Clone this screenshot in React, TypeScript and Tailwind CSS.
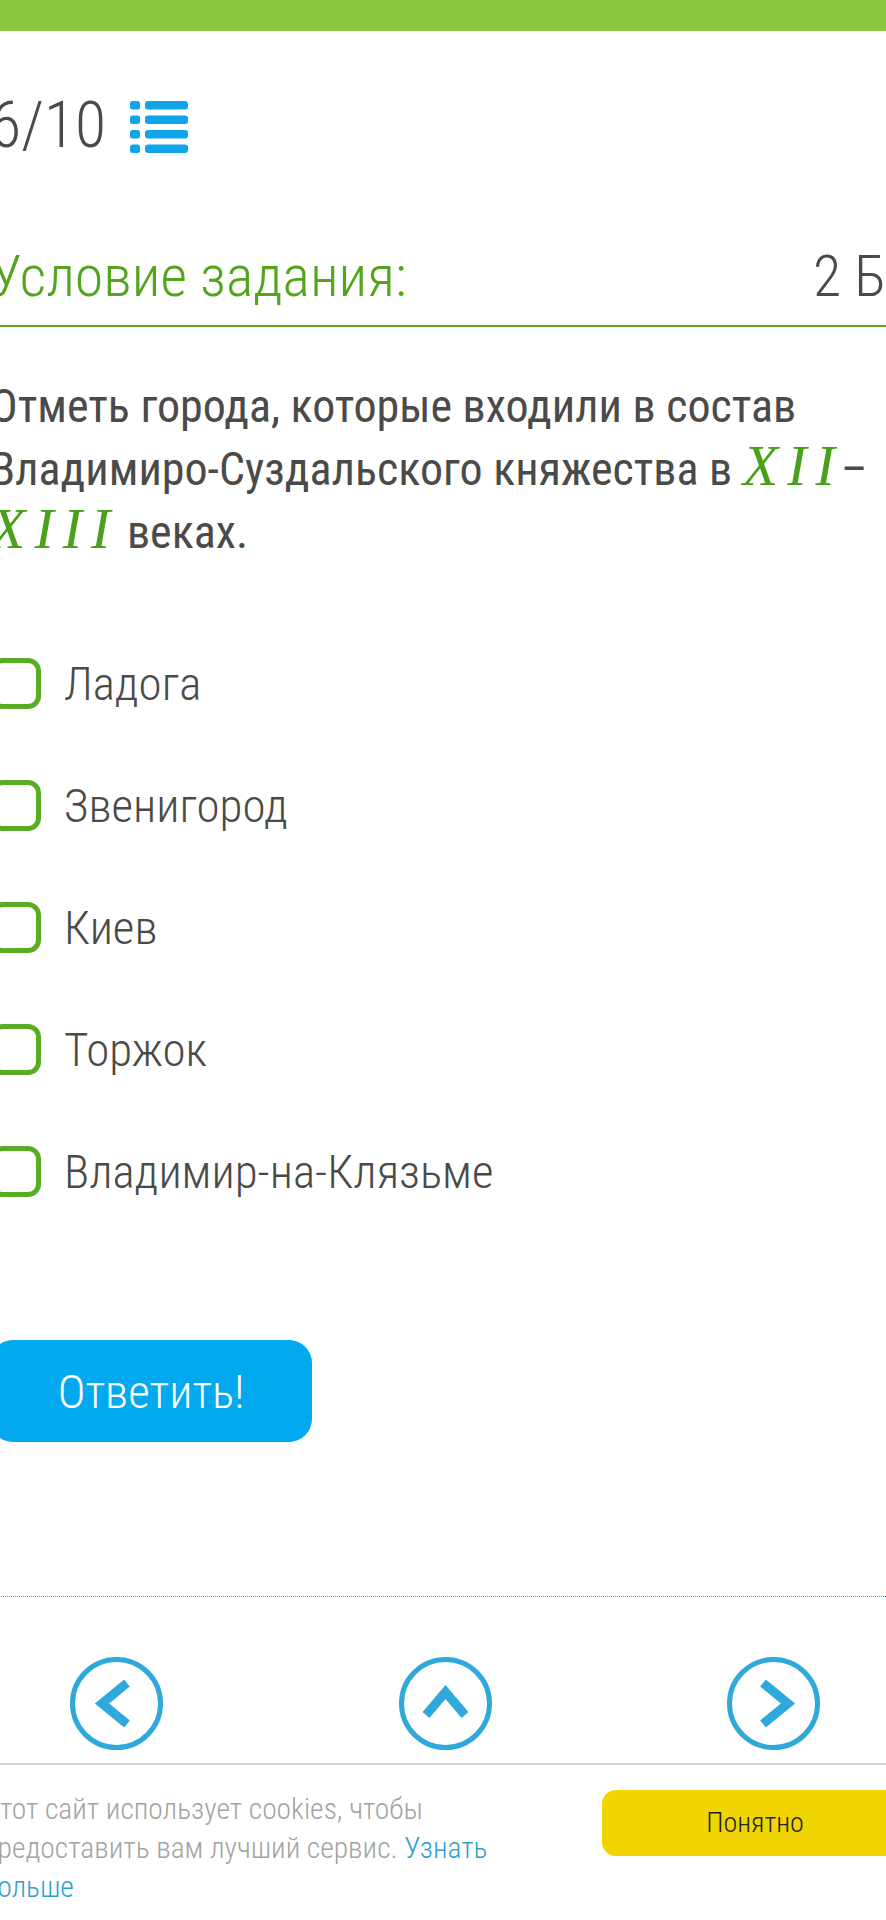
import { useState } from 'react'

const OPTIONS = ['Ладога', 'Звенигород', 'Киев', 'Торжок', 'Владимир-на-Клязьме']

function ListIcon() {
  return (
    <svg width="59" height="54" viewBox="0 0 59 54" className="shrink-0">
      {[0, 1, 2, 3].map((i) => (
        <g key={i} fill="#0fa5e8">
          <rect x="0" y={2 + i * 14.5} width="10" height="8.5" rx="2.5" />
          <rect x="15" y={2 + i * 14.5} width="43" height="8.5" rx="3" />
        </g>
      ))}
    </svg>
  )
}

function NavCircle({ dir }: { dir: 'left' | 'up' | 'right' }) {
  const points =
    dir === 'left' ? '57,26 32,46.5 57,67' : dir === 'right' ? '36,26 61,46.5 36,67' : '27,58 46.5,35 66,58'
  return (
    <svg width="93" height="93" viewBox="0 0 93 93">
      <circle cx="46.5" cy="46.5" r="44" fill="none" stroke="#2fa8dc" strokeWidth="5" />
      <polyline points={points} fill="none" stroke="#2fa8dc" strokeWidth="9" strokeLinejoin="miter" />
    </svg>
  )
}

function Checkbox({ checked, onClick }: { checked: boolean; onClick: () => void }) {
  return (
    <button
      type="button"
      onClick={onClick}
      className="h-[51px] w-[51px] shrink-0 rounded-[13px] border-[5px] border-[#58ad24] bg-white"
    >
      {checked && <span className="block h-full w-full rounded-[6px] bg-[#58ad24]" />}
    </button>
  )
}

// roman numerals set like a formula: serif italic, spaced out
function Roman({ children }: { children: string }) {
  return (
    <i className="mr-[-3px] font-['Liberation_Serif',serif] text-[58px] leading-none tracking-[9px] text-[#4aa01a]">
      {children}
    </i>
  )
}

export default function App() {
  const [picked, setPicked] = useState<string[]>([])

  const toggle = (name: string) =>
    setPicked((prev) => (prev.includes(name) ? prev.filter((p) => p !== name) : [...prev, name]))

  return (
    <div className="h-[1920px] w-[886px] overflow-hidden bg-white font-['Roboto_Condensed',Roboto,sans-serif] text-[#4a4a48]">
      <div className="h-[31px] w-full bg-[#8cc63f]" />

      <div className="-ml-[10px] w-[910px]">
        {/* counter */}
        <div className="mt-[62px] flex h-[66px] items-center gap-[24px]">
          <span className="text-[64px] font-light leading-none">6/10</span>
          <ListIcon />
        </div>

        {/* heading */}
        <div className="mt-[88px] flex items-start justify-between border-b-2 border-[#5aa81e] pb-[20px]">
          <h2 className="text-[58px] font-light leading-none text-[#52a51c]">Условие задания:</h2>
          <span className="text-[58px] font-light leading-none">2 Б.</span>
        </div>

        {/* question */}
        <p className="mt-[48px] text-[46px] leading-[62px]">
          <span className="block whitespace-nowrap">Отметь города, которые входили в состав</span>
          <span className="block whitespace-nowrap">
            Владимиро-Суздальского княжества в <Roman>XII</Roman>–
          </span>
          <span className="block whitespace-nowrap">
            <Roman>XIII</Roman> веках.
          </span>
        </p>

        {/* options */}
        <ul className="mt-[59px] flex flex-col">
          {OPTIONS.map((name) => (
            <li key={name} className="flex h-[122px] items-center gap-[23px]">
              <Checkbox checked={picked.includes(name)} onClick={() => toggle(name)} />
              <span className="text-[47px] font-light leading-none">{name}</span>
            </li>
          ))}
        </ul>

        <button
          type="button"
          className="mt-[108px] flex h-[102px] w-[322px] items-center justify-center rounded-[23px] bg-[#03a9ef] text-[47px] font-light leading-none text-white"
        >
          Ответить!
        </button>

        <div className="mt-[154px] border-t border-dotted border-[#3b9ad0]" />

        {/* navigation */}
        <div className="mt-[60px] flex justify-between px-[80px]">
          <NavCircle dir="left" />
          <NavCircle dir="up" />
          <NavCircle dir="right" />
        </div>
      </div>

      {/* cookie notice */}
      <div className="mt-[13px] border-t-2 border-[#d4d4d4]">
        <div className="-ml-[17px] flex w-[925px] items-start justify-between pt-[25px]">
          <p className="w-[525px] text-[29.5px] font-light leading-[39px] text-[#a3a3a3]">
            Этот сайт использует cookies, чтобы предоставить вам лучший сервис.{' '}
            <a className="text-[#2f9fd0]">Узнать больше</a>
          </p>
          <button
            type="button"
            className="h-[66px] w-[306px] rounded-[14px] bg-[#f0d500] text-[28px] font-light text-[#222]"
          >
            Понятно
          </button>
        </div>
      </div>
    </div>
  )
}
